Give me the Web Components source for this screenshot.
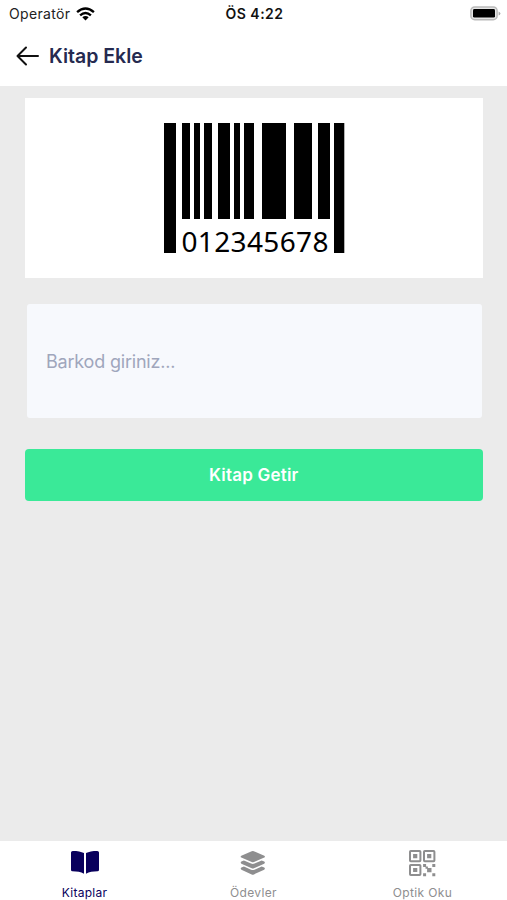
<!DOCTYPE html>
<html lang="tr">
<head>
<meta charset="UTF-8">
<meta name="viewport" content="width=device-width, initial-scale=1">
<title>Kitap Ekle</title>
<style>
  html, body {
    margin: 0;
    height: 100%;
  }

  body {
    --color-surface: #ffffff;
    --color-background: #ebebeb;
    --color-primary: #3ae998;
    --color-heading: #252a50;
    --color-active: #09005d;
    --color-muted: #8e8e8f;
    font-family: Inter, "Liberation Sans", sans-serif;
    overflow: hidden;
  }
</style>
</head>
<body>
<app-screen>
  <status-bar slot="top" carrier="Operatör" time="ÖS 4:22"></status-bar>
  <page-header slot="top">Kitap Ekle</page-header>

  <barcode-card code="012345678"></barcode-card>
  <barcode-field>Barkod giriniz...</barcode-field>
  <primary-button>Kitap Getir</primary-button>

  <tab-bar slot="bottom">
    <tab-item icon="book" active>Kitaplar</tab-item>
    <tab-item icon="layers">Ödevler</tab-item>
    <tab-item icon="qr">Optik Oku</tab-item>
  </tab-bar>
</app-screen>

<script>
// Tab icons, all drawn in a 30x28 box
const icons = {
  book: `
    <path d="M1 2.6Q1 1 2.8 1C7.5 1 11.2 1.6 14 3.1V23.7C10.7 22 7.2 21.4 2.4 21.3Q1 21.3 1 19.8Z"/>
    <path d="M29 2.6Q29 1 27.2 1C22.5 1 18.8 1.6 16 3.1V23.7C19.3 22 22.8 21.4 27.6 21.3Q29 21.3 29 19.8Z"/>
  `,
  layers: `
    <g transform="translate(-.9 0)">
      <path d="M13.6 1.2Q14.7 .7 15.8 1.2L26.2 5.8Q27.5 6.7 26.2 7.6L15.8 12.1Q14.7 12.6 13.6 12.1L3.2 7.6Q1.9 6.7 3.2 5.8Z"/>
      <path d="M3.3 11.4L5.8 10.4L13 13.6Q14.7 14.3 16.4 13.6L23.6 10.4L26.1 11.4Q27.5 12.4 26.1 13.7L15.8 18.2Q14.7 18.7 13.6 18.2L3.3 13.7Q1.9 12.4 3.3 11.4Z"/>
      <path d="M3.3 17.5L5.8 16.5L13 19.7Q14.7 20.4 16.4 19.7L23.6 16.5L26.1 17.5Q27.5 18.5 26.1 19.8L15.8 24.4Q14.7 24.9 13.6 24.4L3.3 19.8Q1.9 18.5 3.3 17.5Z"/>
    </g>
  `,
  qr: `
    <g transform="translate(-.9 0)">
      <g fill="none" stroke="currentColor" stroke-width="2">
        <rect x="2.9" y="1" width="10.4" height="10.2" rx=".8"/>
        <rect x="16.9" y="1" width="10.4" height="10.2" rx=".8"/>
        <rect x="2.9" y="14.9" width="10.4" height="10.2" rx=".8"/>
      </g>
      <path d="M6 4h4.2v4.2H6zM20 4h4.2v4.2H20zM6 17.9h4.2v4.2H6zM16 14h3v3h-3zM25.2 14h3v3h-3zM20 17.9h4.4v4.4H20zM18.4 16.4h2.4v2.4h-2.4zM16 23.2h3v3h-3zM25.2 23.2h3v3h-3z"/>
    </g>
  `
};

class AppScreen extends HTMLElement {
  constructor() {
    super();
    this.attachShadow({ mode: 'open' }).innerHTML = `
      <style>
        :host {
          display: flex;
          flex-direction: column;
          height: 100vh;
          background: var(--color-background);
        }

        main {
          flex: 1;
          display: flex;
          flex-direction: column;
          padding: 12px 24.5px 0 25px;
        }
      </style>
      <slot name="top"></slot>
      <main><slot></slot></main>
      <slot name="bottom"></slot>
    `;
  }
}

class StatusBar extends HTMLElement {
  connectedCallback() {
    this.attachShadow({ mode: 'open' }).innerHTML = `
      <style>
        :host {
          display: grid;
          grid-template-columns: 1fr auto 1fr;
          align-items: center;
          height: 27px;
          padding: 0 6px 0 9px;
          background: var(--color-surface);
          color: #222;
          font-size: 14px;
        }

        .carrier {
          display: flex;
          align-items: center;
          gap: 5.5px;
          letter-spacing: 0.35px;
        }

        .time {
          color: #111;
          font-weight: 600;
          letter-spacing: 0.5px;
          margin-right: 1px;
        }

        .battery {
          justify-self: end;
        }

        svg {
          display: block;
        }
      </style>
      <div class="carrier">
        <span>${this.getAttribute('carrier')}</span>
        <svg width="19" height="14" viewBox="0 0 19 14">
          <g fill="none" stroke="#000" stroke-width="2.4">
            <path d="M1.1 5.2Q9.5-2.2 17.9 5.2"/>
            <path d="M4.1 8.3Q9.5 3.5 14.9 8.3"/>
          </g>
          <path d="M6.3 10.2Q9.5 7.6 12.7 10.2L9.5 13.4Z"/>
        </svg>
      </div>
      <span class="time">${this.getAttribute('time')}</span>
      <svg class="battery" width="31" height="15" viewBox="0 0 31 15">
        <rect x=".9" y=".9" width="26.2" height="12.8" rx="3.8" fill="#e6e6e6" stroke="#bababa" stroke-width="1.5"/>
        <rect x="3" y="3" width="22" height="8.6" rx="1.4"/>
        <path d="M28.6 5.4Q30.4 6.1 30.4 7.5T28.6 9.6Z" fill="#aaa"/>
      </svg>
    `;
  }
}

class PageHeader extends HTMLElement {
  constructor() {
    super();
    this.attachShadow({ mode: 'open' }).innerHTML = `
      <style>
        :host {
          display: flex;
          align-items: center;
          gap: 10px;
          box-sizing: border-box;
          height: 59px;
          padding: 0 16px 2px;
          background: var(--color-surface);
        }

        h1 {
          margin: 0;
          color: var(--color-heading);
          font-size: 19.5px;
          font-weight: 600;
          letter-spacing: 0;
        }
      </style>
      <svg width="23" height="20" viewBox="0 0 23 20" fill="none" stroke="#111" stroke-width="2" stroke-linecap="round" stroke-linejoin="round">
        <path d="M22 10H1.5M10 1.5L1.5 10L10 18.5"/>
      </svg>
      <h1><slot></slot></h1>
    `;
  }
}

class BarcodeCard extends HTMLElement {
  connectedCallback() {
    // [x, width, height] of each bar
    const bars = [
      [0, 12, 130], [18, 8, 96], [30, 6, 96], [40, 8, 96], [54, 12, 96], [70, 6, 96],
      [80, 10, 96], [98, 24, 96], [130, 18, 96], [154, 12, 96], [170, 10.3, 130]
    ];

    this.attachShadow({ mode: 'open' }).innerHTML = `
      <style>
        :host {
          display: flex;
          justify-content: center;
          align-items: center;
          height: 180px;
          background: var(--color-surface);
        }

        text {
          font-family: "Noto Sans", "Open Sans", sans-serif;
          font-size: 28px;
        }
      </style>
      <svg width="180" height="160" viewBox="0 -15 180 160" overflow="visible">
        ${bars.map(([x, w, h]) => `<rect x="${x}" y="0" width="${w}" height="${h}"/>`).join('')}
        <text x="17.5" y="129.3" textLength="147">${this.getAttribute('code')}</text>
      </svg>
    `;
  }
}

class BarcodeField extends HTMLElement {
  constructor() {
    super();
    this.attachShadow({ mode: 'open' }).innerHTML = `
      <style>
        :host {
          display: flex;
          align-items: center;
          height: 114px;
          margin: 26px 1px 0 1.5px;
          padding-left: 19.5px;
          box-sizing: border-box;
          border-radius: 3px;
          background: #f7f9fd;
          color: #9fa6bc;
          font-size: 18px;
          letter-spacing: -0.2px;
        }
      </style>
      <slot></slot>
    `;
  }
}

class PrimaryButton extends HTMLElement {
  constructor() {
    super();
    this.attachShadow({ mode: 'open' }).innerHTML = `
      <style>
        :host {
          display: flex;
          margin-top: 31px;
        }

        button {
          flex: 1;
          height: 52px;
          padding: 0;
          border: 0;
          border-radius: 4px;
          background: var(--color-primary);
          color: #fff;
          font: inherit;
          font-size: 17px;
          font-weight: 600;
          letter-spacing: 0.2px;
        }
      </style>
      <button type="button"><slot></slot></button>
    `;
  }
}

class TabBar extends HTMLElement {
  constructor() {
    super();
    this.attachShadow({ mode: 'open' }).innerHTML = `
      <style>
        :host {
          display: grid;
          grid-template-columns: repeat(3, 1fr);
          height: 59px;
          background: var(--color-surface);
        }
      </style>
      <slot></slot>
    `;
  }
}

class TabItem extends HTMLElement {
  connectedCallback() {
    this.attachShadow({ mode: 'open' }).innerHTML = `
      <style>
        :host {
          display: flex;
          flex-direction: column;
          align-items: center;
          gap: 7px;
          padding-top: 9px;
          color: var(--color-muted);
          font-size: 12px;
          line-height: 15px;
          letter-spacing: 0.35px;
        }

        :host([active]) {
          color: var(--color-active);
          letter-spacing: 0.25px;
        }

        svg {
          display: block;
          fill: currentColor;
        }
      </style>
      <svg width="30" height="28" viewBox="0 0 30 28">${icons[this.getAttribute('icon')]}</svg>
      <span><slot></slot></span>
    `;
  }
}

customElements.define('app-screen', AppScreen);
customElements.define('status-bar', StatusBar);
customElements.define('page-header', PageHeader);
customElements.define('barcode-card', BarcodeCard);
customElements.define('barcode-field', BarcodeField);
customElements.define('primary-button', PrimaryButton);
customElements.define('tab-bar', TabBar);
customElements.define('tab-item', TabItem);
</script>
</body>
</html>
